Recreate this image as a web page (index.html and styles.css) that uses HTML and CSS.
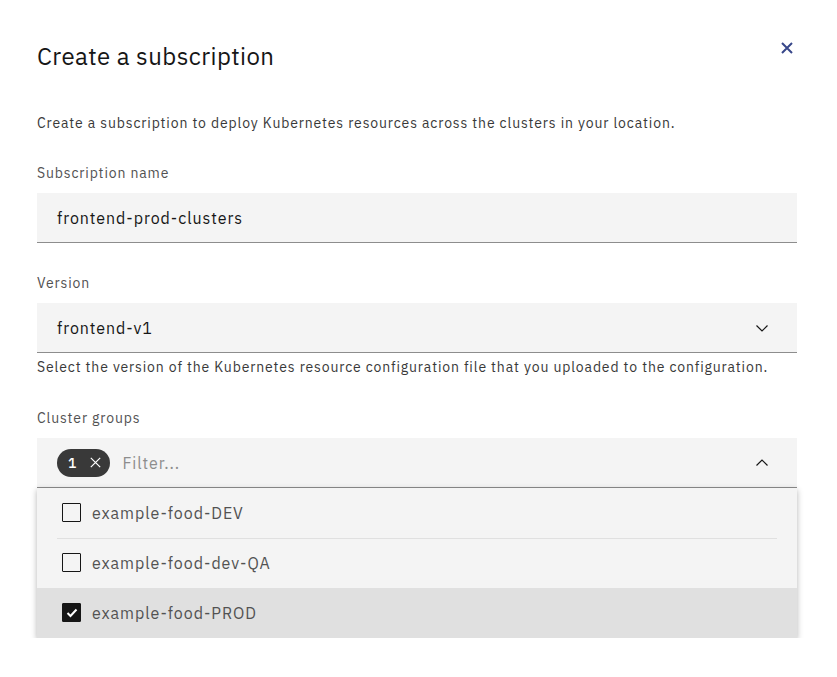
FILE: index.html
```html
<!DOCTYPE html>
<html lang="en">
<head>
<meta charset="utf-8">
<title>Create a subscription</title>
<link rel="stylesheet" href="styles.css">
</head>
<body>
<div class="modal">
  <div class="modal-header">
    <h2 class="modal-title">Create a subscription</h2>
    <button class="close-btn" aria-label="Close">
      <svg width="12" height="12" viewBox="0 0 12 12"><path d="M1 1 L11 11 M11 1 L1 11" stroke="#38478a" stroke-width="2" fill="none"/></svg>
    </button>
  </div>
  <p class="desc">Create a subscription to deploy Kubernetes resources across the clusters in your location.</p>

  <div class="field field-name">
    <label class="label">Subscription name</label>
    <div class="input">frontend-prod-clusters</div>
  </div>

  <div class="field field-version">
    <label class="label">Version</label>
    <div class="input select">
      <span>frontend-v1</span>
      <svg class="chev" width="16" height="16" viewBox="0 0 16 16"><path d="M2.5 5.5 L8 11 L13.5 5.5" stroke="#161616" stroke-width="1.2" fill="none"/></svg>
    </div>
    <div class="helper">Select the version of the Kubernetes resource configuration file that you uploaded to the configuration.</div>
  </div>

  <div class="field field-groups">
    <label class="label">Cluster groups</label>
    <div class="multiselect">
      <div class="input multi">
        <span class="tag">1<svg width="11" height="11" viewBox="0 0 11 11"><path d="M0.8 0.8 L10.2 10.2 M10.2 0.8 L0.8 10.2" stroke="#fff" stroke-width="1.2" fill="none"/></svg></span>
        <span class="placeholder">Filter...</span>
        <svg class="chev" width="16" height="16" viewBox="0 0 16 16"><path d="M2.5 10.5 L8 5 L13.5 10.5" stroke="#161616" stroke-width="1.2" fill="none"/></svg>
      </div>
      <ul class="menu">
        <li class="item"><span class="cb"></span><span class="item-text">example-food-DEV</span></li>
        <li class="item"><span class="cb"></span><span class="item-text">example-food-dev-QA</span></li>
        <li class="item selected"><span class="cb checked"><svg width="12" height="10" viewBox="0 0 12 10"><path d="M1.5 5 L4.5 8 L10.5 1.5" stroke="#fff" stroke-width="2" fill="none"/></svg></span><span class="item-text">example-food-PROD</span></li>
      </ul>
    </div>
  </div>
</div>
</body>
</html>
```

FILE: styles.css
```css
* { box-sizing: border-box; }
body {
  margin: 0;
  background: #ffffff;
  font-family: "IBM Plex Sans", "Open Sans", "Noto Sans", sans-serif;
  color: #161616;
}
.modal {
  padding: 40px 40px 0 37px;
}
.modal-header {
  display: flex;
  justify-content: space-between;
  align-items: flex-start;
}
.modal-title {
  margin: 0;
  font-size: 24px;
  line-height: 32px;
  font-weight: 400;
  letter-spacing: 0.43px;
  color: #161616;
}
.close-btn {
  border: 0;
  background: none;
  padding: 0;
  margin: 2px 4px 0 0;
  width: 12px;
  height: 12px;
  display: flex;
}
.desc {
  margin: 41px 0 0;
  font-size: 14px;
  line-height: 20px;
  letter-spacing: 0.86px;
  color: #393939;
}
.field { display: flex; flex-direction: column; }
.field-name { margin-top: 30px; }
.field-version { margin-top: 30px; }
.field-groups { margin-top: 31px; }
.label {
  font-size: 14px;
  line-height: 20px;
  letter-spacing: 0.86px;
  color: #525252;
  margin-bottom: 10px;
}
.input {
  height: 50px;
  background: #f4f4f4;
  border-bottom: 1px solid #8d8d8d;
  padding: 0 20px;
  display: flex;
  align-items: center;
  font-size: 16px;
  letter-spacing: 0.95px;
  color: #161616;
}
.select { justify-content: space-between; padding-right: 27px; }
.chev { flex: none; }
.helper {
  margin-top: 4px;
  font-size: 14px;
  line-height: 20px;
  letter-spacing: 0.86px;
  color: #393939;
}
.multiselect { position: relative; }
.multi { gap: 12px; padding-right: 27px; }
.tag {
  display: inline-flex;
  align-items: center;
  gap: 14px;
  height: 28px;
  padding: 0 9px 0 11px;
  border-radius: 14px;
  background: #393939;
  color: #ffffff;
  font-size: 14px;
  font-weight: 500;
  letter-spacing: 0;
}
.placeholder { flex: 1; color: #8d8d8d; }
.menu {
  list-style: none;
  margin: 0;
  padding: 0;
  background: #f4f4f4;
  box-shadow: 0 2px 6px rgba(0, 0, 0, 0.3);
  position: relative;
}
.item {
  height: 50px;
  display: flex;
  align-items: center;
  gap: 11px;
  padding: 0 20px 1px 25px;
  font-size: 16px;
  letter-spacing: 0.95px;
  color: #525252;
  position: relative;
}
.item + .item::before {
  content: "";
  position: absolute;
  left: 20px;
  right: 20px;
  top: 0;
  border-top: 1px solid #e0e0e0;
}
.item.selected { background: #e0e0e0; }
.item.selected::before { display: none; }
.cb {
  width: 19px;
  height: 19px;
  border: 1px solid #161616;
  border-radius: 1px;
  display: flex;
  align-items: center;
  justify-content: center;
}
.cb.checked { background: #161616; }
```
